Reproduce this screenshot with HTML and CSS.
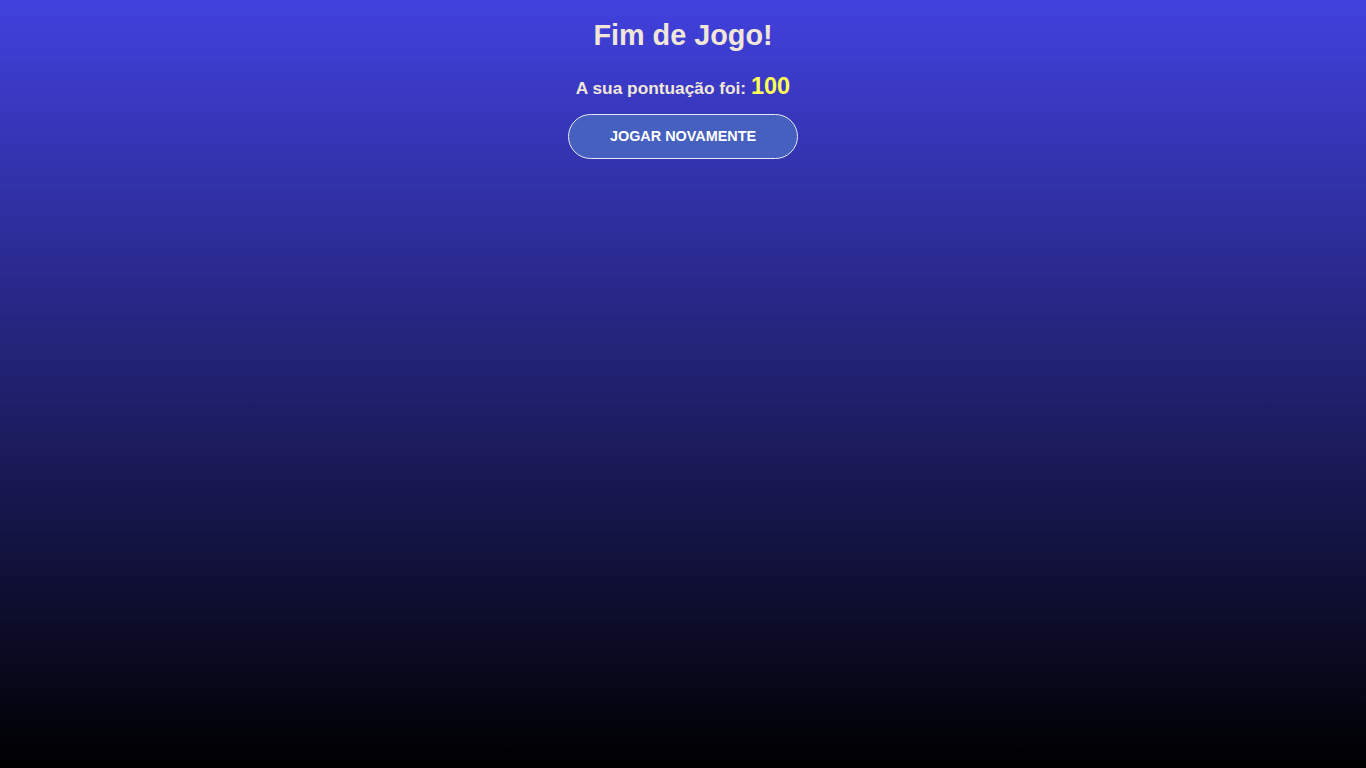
FILE: index.html
```html
<!DOCTYPE html>
<html lang="pt">
<head>
<meta charset="utf-8">
<title>Fim de Jogo</title>
<link rel="stylesheet" href="styles.css">
</head>
<body>
<main class="screen">
  <h1 class="title">Fim de Jogo!</h1>
  <p class="score">A sua pontuação foi: <span class="score-value">100</span></p>
  <button class="restart">JOGAR NOVAMENTE</button>
</main>
</body>
</html>
```
FILE: styles.css
```css
html, body {
  margin: 0;
  padding: 0;
  height: 100%;
}
body {
  background: linear-gradient(to bottom, #4141de 0%, #000000 100%);
  font-family: "Liberation Sans", Arial, sans-serif;
  color: #f1e7d9;
}
.screen {
  display: flex;
  flex-direction: column;
  align-items: center;
  padding-top: 19px;
}
.title {
  margin: 0;
  font-size: 28.8px;
  line-height: 33px;
  font-weight: bold;
}
.score {
  margin: 20px 0 0;
  font-size: 17.3px;
  font-weight: bold;
  line-height: 28px;
}
.score-value {
  color: #ffff55;
  font-size: 23.5px;
}
.restart {
  margin-top: 12px;
  width: 230px;
  height: 45px;
  padding: 0 0 2px;
  border: 1px solid #e8e8f4;
  border-radius: 23px;
  background: #4560bf;
  color: #ffffff;
  font-family: "Liberation Sans", Arial, sans-serif;
  font-size: 14.4px;
  font-weight: bold;
  cursor: pointer;
}
```
